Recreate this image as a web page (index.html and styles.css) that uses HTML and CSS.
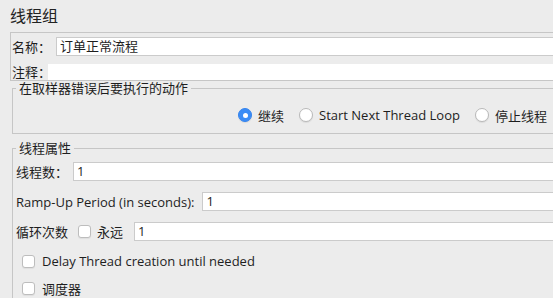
FILE: index.html
```html
<!DOCTYPE html>
<html lang="zh">
<head>
<meta charset="utf-8">
<title>线程组</title>
<link rel="stylesheet" href="styles.css">
</head>
<body>
<div class="page">
  <div class="title">线程组</div>

  <div class="box names">
    <div class="row name-row">
      <span class="label">名称：</span>
      <div class="field">订单正常流程</div>
    </div>
    <div class="row comment-row">
      <span class="label">注释：</span>
      <div class="field comment"></div>
    </div>
  </div>

  <fieldset class="group action">
    <legend>在取样器错误后要执行的动作</legend>
    <div class="radios">
      <label class="opt"><span class="radio on"></span><span>继续</span></label>
      <label class="opt"><span class="radio"></span><span>Start Next Thread Loop</span></label>
      <label class="opt"><span class="radio"></span><span>停止线程</span></label>
    </div>
  </fieldset>

  <fieldset class="group props">
    <legend>线程属性</legend>
    <div class="prow threads">
      <span class="label">线程数：</span>
      <div class="field">1</div>
    </div>
    <div class="prow ramp">
      <span class="label">Ramp-Up Period (in seconds):</span>
      <div class="field">1</div>
    </div>
    <div class="prow loops">
      <span class="label">循环次数</span>
      <span class="check"></span>
      <span class="forever">永远</span>
      <div class="field">1</div>
    </div>
    <div class="crow delay">
      <span class="check"></span>
      <span>Delay Thread creation until needed</span>
    </div>
    <div class="crow sched">
      <span class="check"></span>
      <span>调度器</span>
    </div>
  </fieldset>
</div>
</body>
</html>
```

FILE: styles.css
```css
html, body {
  margin: 0;
  padding: 0;
  background: #ececec;
  overflow: hidden;
}

body {
  font-family: "Open Sans", "Noto Sans CJK SC", sans-serif;
  font-size: 13px;
  color: #1e1e1e;
}

.page {
  display: flex;
  flex-direction: column;
  height: 298px;
  overflow: hidden;
}

.title {
  font-size: 16px;
  line-height: 22px;
  margin: 5px 0 5px 10px;
  color: #222;
}

.box {
  margin-left: 10px;
  border: 1px solid #c6c6c6;
  border-right: none;
}

.row {
  display: flex;
  align-items: center;
}

.label {
  line-height: 16px;
  white-space: nowrap;
}

.field {
  flex: 1;
  min-width: 0;
  height: 17px;
  line-height: 17px;
  background: #fff;
  border: 1px solid #cbcbcb;
  border-right: none;
  padding-left: 3px;
  white-space: nowrap;
}

.name-row {
  margin-top: 4px;
  padding-left: 1px;
}

.name-row .label {
  margin-right: 5px;
}

.comment-row {
  margin-top: 8px;
  padding-left: 1px;
}

.comment-row .label {
  margin-right: -3px;
}

.field.comment {
  height: 16px;
  border: none;
}

.group {
  margin: 0 0 0 12px;
  padding: 0;
  border: 1px solid #c6c6c6;
  border-right: none;
  min-width: 0;
}

.group legend {
  margin-left: 3px;
  padding: 0 3px;
  line-height: 15px;
}

.radios {
  display: flex;
  align-items: center;
  gap: 15px;
  padding: 9px 0 8px 225px;
  height: 20px;
}

.opt {
  display: flex;
  align-items: center;
  gap: 6px;
  white-space: nowrap;
}

.radio {
  width: 12px;
  height: 12px;
  border-radius: 50%;
  background: #fff;
  border: 1px solid #b9b9b9;
  box-shadow: 0 1px 1px rgba(0,0,0,0.08);
  display: flex;
  align-items: center;
  justify-content: center;
  flex: none;
}

.radio.on {
  background: #3a8cf6;
  border-color: #3584ee;
}

.radio.on::after {
  content: "";
  width: 5px;
  height: 5px;
  border-radius: 50%;
  background: #fff;
}

.props {
  margin-top: 7px;
  border-bottom: none;
  flex: 1;
}

.prow {
  display: flex;
  align-items: center;
  padding-left: 3px;
}

.threads {
  margin-top: 6px;
}

.threads .label {
  margin-right: 5px;
}

.ramp {
  margin-top: 11px;
}

.ramp .label {
  margin-right: 8px;
}

.loops {
  margin-top: 11px;
}

.loops .check {
  margin-left: 10px;
}

.forever {
  margin-left: 6px;
  margin-right: 11px;
}

.check {
  width: 11px;
  height: 11px;
  border-radius: 3px;
  background: #fff;
  border: 1px solid #bdbdbd;
  box-shadow: 0 1px 1px rgba(0,0,0,0.06);
  flex: none;
}

.crow {
  display: flex;
  align-items: center;
  gap: 7px;
  height: 20px;
  padding-left: 9px;
  white-space: nowrap;
}

.delay {
  margin-top: 10px;
}

.sched {
  margin-top: 7px;
}
```
